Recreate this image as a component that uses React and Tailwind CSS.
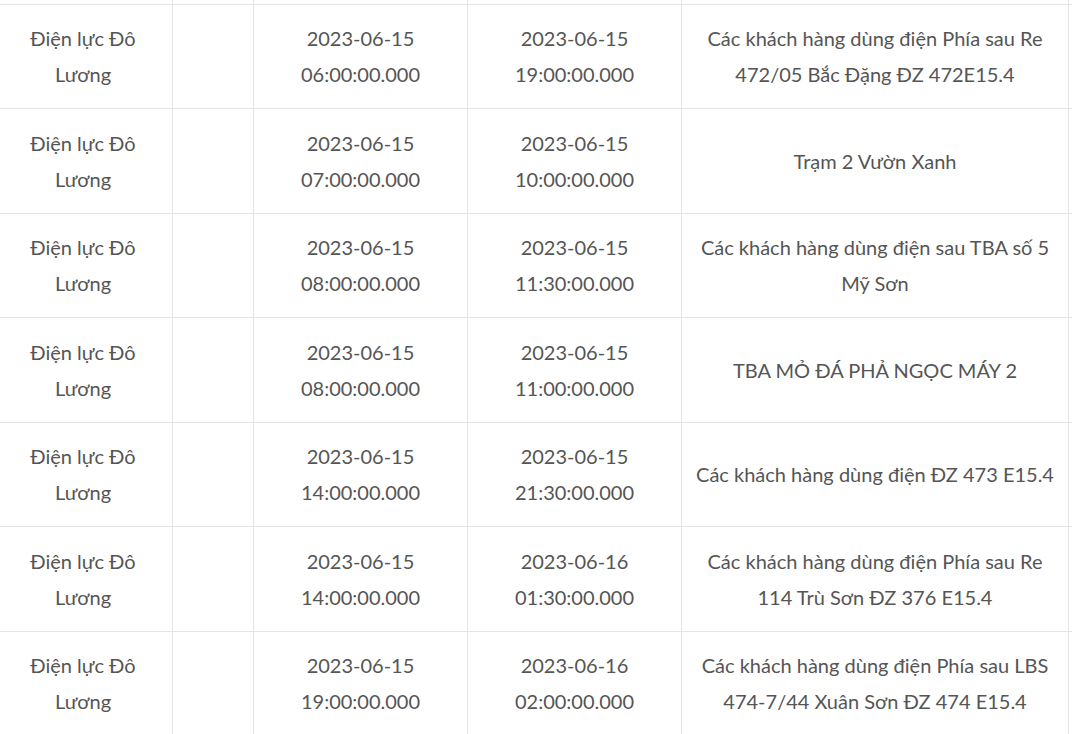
const rows = [
  ["2023-06-15", "06:00:00.000", "2023-06-15", "19:00:00.000", "Các khách hàng dùng điện Phía sau Re 472/05 Bắc Đặng ĐZ 472E15.4"],
  ["2023-06-15", "07:00:00.000", "2023-06-15", "10:00:00.000", "Trạm 2 Vườn Xanh"],
  ["2023-06-15", "08:00:00.000", "2023-06-15", "11:30:00.000", "Các khách hàng dùng điện sau TBA số 5 Mỹ Sơn"],
  ["2023-06-15", "08:00:00.000", "2023-06-15", "11:00:00.000", "TBA MỎ ĐÁ PHẢ NGỌC MÁY 2"],
  ["2023-06-15", "14:00:00.000", "2023-06-15", "21:30:00.000", "Các khách hàng dùng điện ĐZ 473 E15.4"],
  ["2023-06-15", "14:00:00.000", "2023-06-16", "01:30:00.000", "Các khách hàng dùng điện Phía sau Re 114 Trù Sơn ĐZ 376 E15.4"],
  ["2023-06-15", "19:00:00.000", "2023-06-16", "02:00:00.000", "Các khách hàng dùng điện Phía sau LBS 474-7/44 Xuân Sơn ĐZ 474 E15.4"],
];

const td = "border border-[#e5e5e5] px-3 py-[15.75px] text-center align-middle";

export default function App() {
  return (
    <div className="w-[1072px] h-[734px] overflow-hidden bg-white font-['Lato',sans-serif] text-[20px] leading-[36px] text-[#555]">
      <table className="ml-[-7px] table-fixed border-collapse w-[1090px]">
        <colgroup>
          <col className="w-[179px]" />
          <col className="w-[81px]" />
          <col className="w-[214px]" />
          <col className="w-[214px]" />
          <col className="w-[387px]" />
          <col className="w-[15px]" />
        </colgroup>
        <tbody>
          <tr>
            {[0, 1, 2, 3, 4, 5].map((i) => (
              <td key={i} className="border-x border-b border-[#e5e5e5] p-0 h-[4px]" />
            ))}
          </tr>
          {rows.map((r, i) => (
            <tr key={i}>
              <td className={td}>Điện lực Đô Lương</td>
              <td className={td}></td>
              <td className={td}>{r[0]}<br />{r[1]}</td>
              <td className={td}>{r[2]}<br />{r[3]}</td>
              <td className={td}>{r[4]}</td>
              <td className={td}></td>
            </tr>
          ))}
        </tbody>
      </table>
    </div>
  );
}
